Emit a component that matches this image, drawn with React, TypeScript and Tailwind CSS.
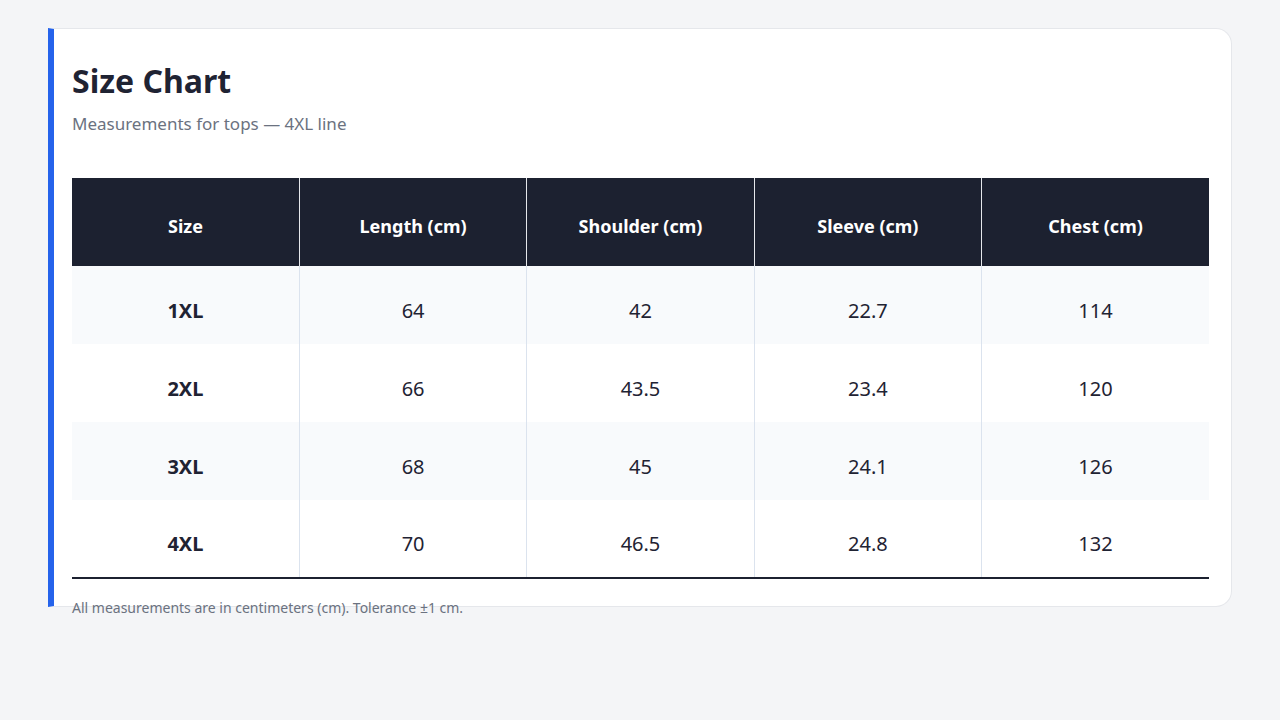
import React from "react";

const rows = [
  { size: "1XL", length: "64", shoulder: "42", sleeve: "22.7", chest: "114" },
  { size: "2XL", length: "66", shoulder: "43.5", sleeve: "23.4", chest: "120" },
  { size: "3XL", length: "68", shoulder: "45", sleeve: "24.1", chest: "126" },
  { size: "4XL", length: "70", shoulder: "46.5", sleeve: "24.8", chest: "132" },
];

const headers = ["Size", "Length (cm)", "Shoulder (cm)", "Sleeve (cm)", "Chest (cm)"];

function App() {
  return (
    <div
      className="min-h-[720px] w-full bg-[#f4f5f7] pt-[28px] pl-[48px]"
      style={{ fontFamily: '"Noto Sans", "Open Sans", sans-serif' }}
    >
      <div className="h-[579px] w-[1184px] rounded-r-2xl border border-l-[6px] border-[#e5e7eb] border-l-[#2563eb] bg-white pt-[30px] pl-[18px] pr-[22px]">
        <h1 className="text-[32px] font-bold leading-[44px] text-[#1f2333]">Size Chart</h1>
        <p className="mt-[8px] text-[17px] leading-[26px] text-[#6b7280]">
          Measurements for tops — 4XL line
        </p>

        <table className="mt-[41px] w-full table-fixed border-collapse">
          <thead>
            <tr className="h-[88px] bg-[#1c2130]">
              {headers.map((h, i) => (
                <th
                  key={h}
                  className={`pt-[8px] text-center text-[18px] font-bold text-white ${
                    i > 0 ? "border-l border-[#e5e7eb]" : ""
                  }`}
                >
                  {h}
                </th>
              ))}
            </tr>
          </thead>
          <tbody className="border-b-2 border-[#1c2130]">
            {rows.map((r, idx) => (
              <tr key={r.size} className={`h-[78px] ${idx % 2 === 0 ? "bg-[#f8fafc]" : "bg-white"}`}>
                <td className="pt-[11px] text-center text-[20px] font-bold text-[#1f2333]">{r.size}</td>
                <td className="border-l border-[#dbe3ee] pt-[11px] text-center text-[20px] text-[#1f2333]">{r.length}</td>
                <td className="border-l border-[#dbe3ee] pt-[11px] text-center text-[20px] text-[#1f2333]">{r.shoulder}</td>
                <td className="border-l border-[#dbe3ee] pt-[11px] text-center text-[20px] text-[#1f2333]">{r.sleeve}</td>
                <td className="border-l border-[#dbe3ee] pt-[11px] text-center text-[20px] text-[#1f2333]">{r.chest}</td>
              </tr>
            ))}
          </tbody>
        </table>

        <p className="mt-[19px] text-[14px] leading-[20px] text-[#6b7280]">
          All measurements are in centimeters (cm). Tolerance ±1 cm.
        </p>
      </div>
    </div>
  );
}

export default App;
